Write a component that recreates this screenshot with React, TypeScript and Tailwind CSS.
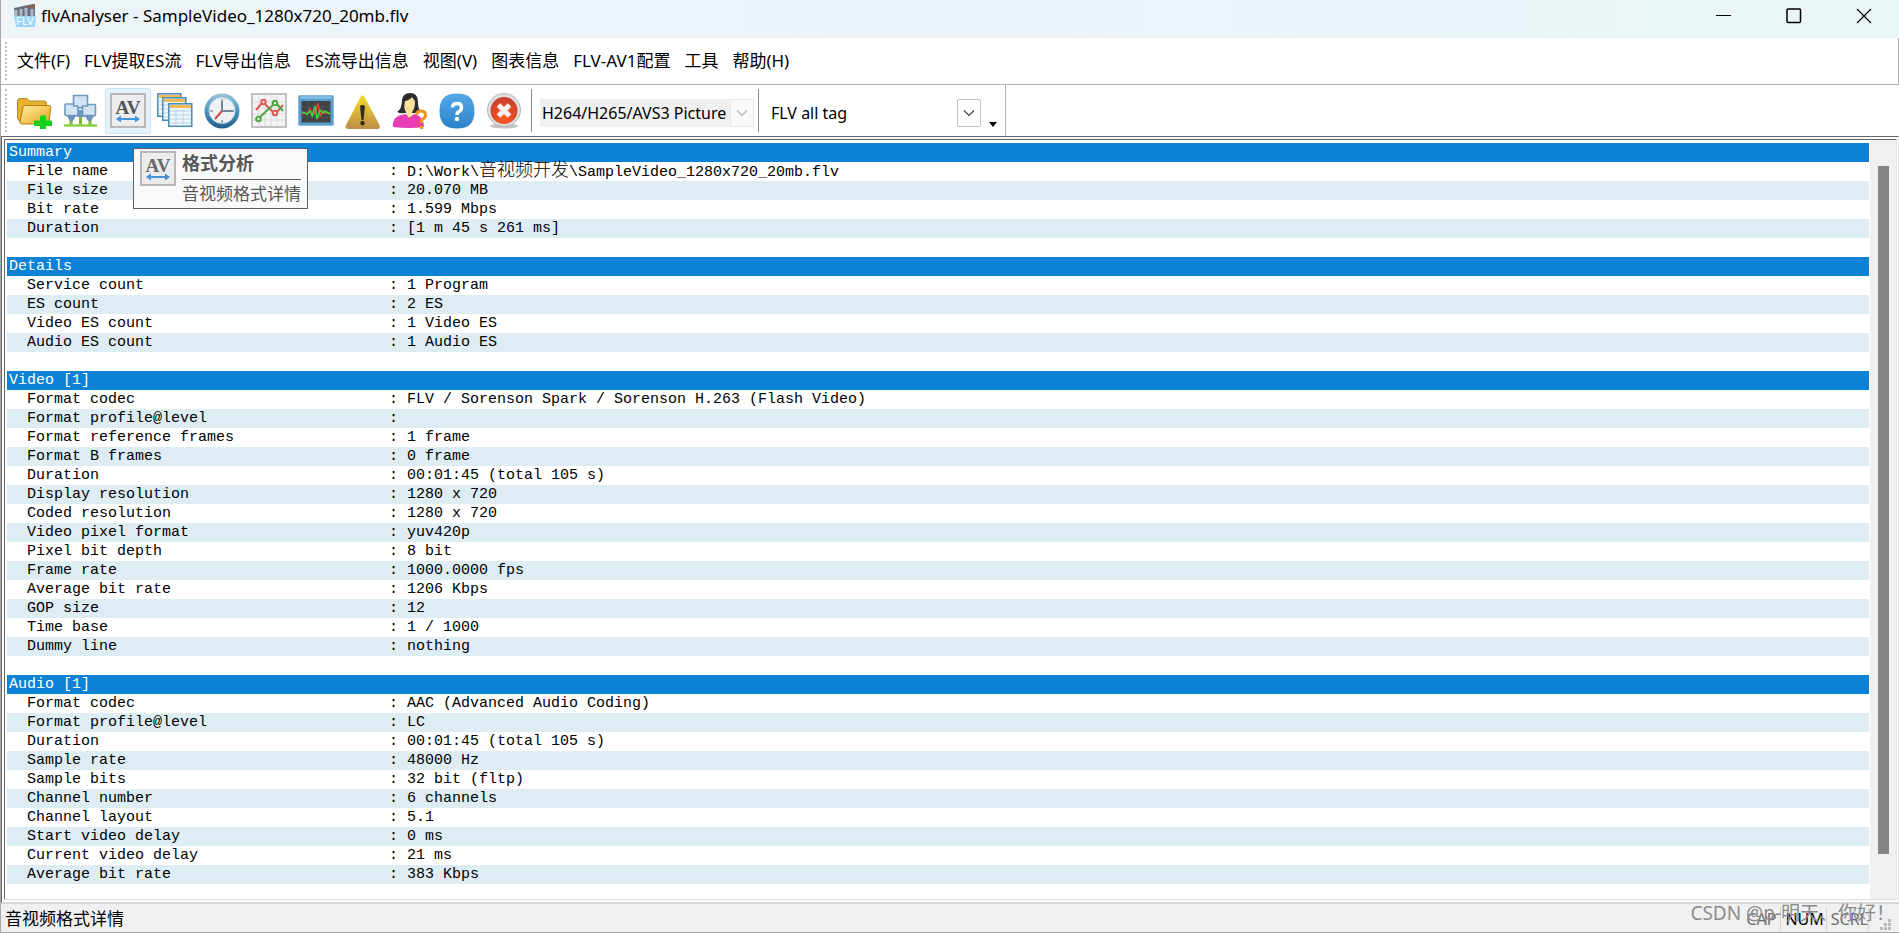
import type { ReactNode } from "react";

type Row = { label: string; value: ReactNode };
type Section = { title: string; rows: Row[] };

const r = (label: string, value: ReactNode): Row => ({ label, value });

const sections: Section[] = [
  {
    title: "Summary",
    rows: [
      r(
        "File name",
        <>
          D:\Work\<span className="text-lg leading-none font-light">音视频开发</span>\SampleVideo_1280x720_20mb.flv
        </>
      ),
      r("File size", "20.070 MB"),
      r("Bit rate", "1.599 Mbps"),
      r("Duration", "[1 m 45 s 261 ms]"),
    ],
  },
  {
    title: "Details",
    rows: [
      r("Service count", "1 Program"),
      r("ES count", "2 ES"),
      r("Video ES count", "1 Video ES"),
      r("Audio ES count", "1 Audio ES"),
    ],
  },
  {
    title: "Video [1]",
    rows: [
      r("Format codec", "FLV / Sorenson Spark / Sorenson H.263 (Flash Video)"),
      r("Format profile@level", ""),
      r("Format reference frames", "1 frame"),
      r("Format B frames", "0 frame"),
      r("Duration", "00:01:45 (total 105 s)"),
      r("Display resolution", "1280 x 720"),
      r("Coded resolution", "1280 x 720"),
      r("Video pixel format", "yuv420p"),
      r("Pixel bit depth", "8 bit"),
      r("Frame rate", "1000.0000 fps"),
      r("Average bit rate", "1206 Kbps"),
      r("GOP size", "12"),
      r("Time base", "1 / 1000"),
      r("Dummy line", "nothing"),
    ],
  },
  {
    title: "Audio [1]",
    rows: [
      r("Format codec", "AAC (Advanced Audio Coding)"),
      r("Format profile@level", "LC"),
      r("Duration", "00:01:45 (total 105 s)"),
      r("Sample rate", "48000 Hz"),
      r("Sample bits", "32 bit (fltp)"),
      r("Channel number", "6 channels"),
      r("Channel layout", "5.1"),
      r("Start video delay", "0 ms"),
      r("Current video delay", "21 ms"),
      r("Average bit rate", "383 Kbps"),
    ],
  },
];

const menus = [
  "文件(F)",
  "FLV提取ES流",
  "FLV导出信息",
  "ES流导出信息",
  "视图(V)",
  "图表信息",
  "FLV-AV1配置",
  "工具",
  "帮助(H)",
];

function Icon({ children }: { children: ReactNode }) {
  return (
    <svg viewBox="0 0 36 36" className="size-9" aria-hidden="true">
      {children}
    </svg>
  );
}

function FolderIcon() {
  return (
    <Icon>
      <defs>
        <linearGradient id="fold" x1="0" y1="0" x2="1" y2="1">
          <stop offset="0" stopColor="#fff0a0" />
          <stop offset="1" stopColor="#e8a21c" />
        </linearGradient>
      </defs>
      <path d="M1.500 8q0-2.500 2.500-2.500h7l2.500 2.500h15q2 0 2 2v12H8L4 29l-2.500-4z" fill="#e6b12c" stroke="#b58a2c" strokeWidth="1" />
      <path d="M9 12.500h24.500q1.500 0 1.300 1.500L33 28q-.5 3-3 3H6q-2.500 0-2-2.500L7 14.500q.4-2 2-2z" fill="url(#fold)" stroke="#b87d12" strokeWidth="1" />
      <path d="M24 22.500h6v5h6V33h-6v3.500h-6V33h-6v-5.500h6z" fill="#12d21c" />
    </Icon>
  );
}

function NetworkIcon() {
  return (
    <Icon>
      <path d="M8 26v6M17.500 20v12M27 26v6" stroke="#7db83a" strokeWidth="3" />
      <path d="M1 32.500h33" stroke="#8bd04a" strokeWidth="2.500" />
      <path d="M14 17h7l1 7h-8z" fill="#6c9ac6" />
      <g fill="#d3e4f5" stroke="#7098bd" strokeWidth="1.600">
        <rect x="2" y="11" width="13" height="11.500" rx="1" />
        <rect x="19.500" y="11.500" width="13" height="11" rx="1" />
        <path d="M10.500 2.500h14V13h-5l-1.500 2h-2l-1.500-2h-4z" />
      </g>
      <path d="M4 23h9l-3 5H7zM22 23h9l-3 5h-3z" fill="#6c94bc" />
    </Icon>
  );
}

function AvIcon({ large = true }: { large?: boolean }) {
  return (
    <Icon>
      <rect x="1" y="1" width="34" height="33" fill="#ececed" stroke="#b6b8ba" strokeWidth="2" />
      <text
        x="18"
        y="21"
        textAnchor="middle"
        className={large ? "fill-[#505256] font-bold" : "fill-[#67696c] font-bold"}
        fontFamily="Liberation Serif"
        fontSize="19"
      >
        AV
      </text>
      <path d="M8 26h20" stroke="#4492d8" strokeWidth="2" />
      <path d="M6 26l5-3.500v7zM30 26l-5-3.500v7z" fill="#4492d8" />
    </Icon>
  );
}

function Sheet({ x, y }: { x: number; y: number }) {
  return (
    <g transform={`translate(${x} ${y})`}>
      <rect x=".8" y=".8" width="23" height="22.500" fill="#eef6fc" stroke="#4a8ab2" strokeWidth="1.500" />
      <path d="M2 3.500h21" stroke="#f0b95c" strokeWidth="3" />
      <path d="M2 8h21M2 12h21M2 16h21M2 20h21M8 6v17M15 6v17" stroke="#b4d3ea" strokeWidth="1" />
    </g>
  );
}

function SheetsIcon() {
  return (
    <Icon>
      <Sheet x={0} y={0} />
      <Sheet x={5} y={4} />
      <Sheet x={11} y={10} />
    </Icon>
  );
}

function ClockIcon() {
  return (
    <Icon>
      <defs>
        <linearGradient id="ring" x1="0" y1="0" x2="0" y2="1">
          <stop offset="0" stopColor="#9cc4d8" />
          <stop offset=".5" stopColor="#4a94bf" />
          <stop offset="1" stopColor="#205e86" />
        </linearGradient>
      </defs>
      <circle cx="18" cy="18" r="17.500" fill="url(#ring)" />
      <circle cx="18" cy="17.500" r="13" fill="#eff2f4" stroke="#bfd6e3" strokeWidth="1" />
      <path d="M18 6v3M18 27v3M6 18h3M27 18h3" stroke="#8a969e" strokeWidth="1.500" />
      <path d="M18 8v10h11" fill="none" stroke="#6f8797" strokeWidth="2" />
      <path d="M18 18l-7 8" stroke="#c5504a" strokeWidth="2" />
    </Icon>
  );
}

function ChartIcon() {
  return (
    <Icon>
      <rect x="1" y="1" width="34" height="33" fill="#f4f4f4" stroke="#c0c0c0" strokeWidth="2" />
      <path d="M2 9h32M2 15h32M2 21h32M2 27h32M8 2v31M14 2v31M20 2v31M26 2v31" stroke="#dcdcdc" strokeWidth="1" />
      <g fill="none" strokeWidth="2">
        <path d="M5 17l6-7M14 11l8 8M26 19l6-7" stroke="#dc5c54" />
        <circle cx="12.500" cy="9" r="2.200" stroke="#dc5c54" />
        <circle cx="24" cy="20" r="2.200" stroke="#dc5c54" />
        <path d="M9 24L22 12M26 11l6 7" stroke="#4fa642" />
        <circle cx="7.500" cy="26" r="2.300" stroke="#4fa642" />
        <circle cx="24" cy="10" r="2.200" stroke="#4fa642" />
      </g>
    </Icon>
  );
}

function MonitorIcon() {
  return (
    <Icon>
      <rect x=".5" y="2.500" width="35" height="30" rx="1" fill="#5a9fce" stroke="#8ab9da" strokeWidth="1" />
      <path d="M2 4.500h32" stroke="#8cc5ec" strokeWidth="2" />
      <rect x="3.500" y="8" width="29" height="21.500" fill="#404244" />
      <path d="M4 14h28M4 19h28M4 24h28M10 8v21M17 8v21M24 8v21" stroke="#515456" strokeWidth="1" />
      <path d="M4 21l6-1 2-4 3 6 3-4 2-8 2 13 3-5 2 2h5" fill="none" stroke="#e0423a" strokeWidth="1.500" />
      <path d="M4 19l5 2 3-3 2 5 3-10 2 13 3-9 3 3 2-2 5 3" fill="none" stroke="#36d936" strokeWidth="1.500" />
    </Icon>
  );
}

function WarningIcon() {
  return (
    <Icon>
      <defs>
        <linearGradient id="warn" x1="0" y1="0" x2="0" y2="1">
          <stop offset="0" stopColor="#f3dc28" />
          <stop offset="1" stopColor="#bd8d48" />
        </linearGradient>
      </defs>
      <path d="M15.500 4q2-3.500 4 0L34.500 32q1.500 4-2 4H3q-3.500 0-2-4z" fill="url(#warn)" />
      <path d="M15 13q2.500-2 5 0l-1.500 14h-2z" fill="#2f2b20" />
      <circle cx="17.500" cy="30" r="2.200" fill="#2f2b20" />
    </Icon>
  );
}

function PersonIcon() {
  return (
    <Icon>
      <path d="M10 7q1-7 8-7 8 0 8 9 0 7 3 10l-6 1H12q-3 1-7-1 5-3 5-12z" fill="#2d2b2c" />
      <path d="M1 34q-1-10 8-12l5-1 4 3 4-3 5 2q5 3 5 11-15 2-31 0z" fill="#e83db4" />
      <path d="M13 8q5-1 7-4 2 3 3 4 0 8-3 11v2l-3 4-3-4v-2q-3-4-1-11z" fill="#f6e29b" />
      <path d="M24.500 22q0-4 4.500-4t4.500 4q0 3-4 5v3M29.500 33v3" fill="none" stroke="#ee9422" strokeWidth="3" />
    </Icon>
  );
}

function HelpIcon() {
  return (
    <Icon>
      <defs>
        <linearGradient id="help" x1="0" y1="0" x2="0" y2="1">
          <stop offset="0" stopColor="#55a9e8" />
          <stop offset="1" stopColor="#2c82c9" />
        </linearGradient>
      </defs>
      <path d="M18 0.500C30 .5 35.500 6 35.500 18s-5.500 17.500-17.500 17.500S.5 30 .5 18 6 .5 18 .5z" fill="url(#help)" />
      <path d="M13.500 14.500q0-4 4.500-4t4.500 4q0 2.500-2.500 4-2 1-2 3.500" fill="none" stroke="#fff" strokeWidth="3.500" />
      <circle cx="18" cy="26" r="2.200" fill="#fff" />
    </Icon>
  );
}

function CloseIcon() {
  return (
    <Icon>
      <defs>
        <radialGradient id="stop" cx=".5" cy=".75" r=".7">
          <stop offset="0" stopColor="#ff5a1f" />
          <stop offset="1" stopColor="#c8402c" />
        </radialGradient>
      </defs>
      <ellipse cx="18" cy="33" rx="14" ry="2.500" fill="#c4c4c4" />
      <circle cx="18" cy="17" r="16.500" fill="#dedede" stroke="#b9b9b9" strokeWidth="1" />
      <circle cx="18" cy="17.500" r="13.500" fill="url(#stop)" />
      <path d="M12.500 12l11 11M23.500 12l-11 11" stroke="#f6f1ef" strokeWidth="5" />
    </Icon>
  );
}

function AppIcon() {
  return (
    <svg viewBox="0 0 24 24" className="size-6" aria-hidden="true">
      <path d="M1 4l5-1 4-1 5-1 7-1v14H2z" fill="#6a6c74" />
      <path d="M3 6v6M8 5v7M13 4v8M19 5v7" stroke="#a9b8cc" strokeWidth="3" />
      <path d="M14 3l8-2" stroke="#8d5f4c" strokeWidth="2" />
      <path d="M1 12h22l-1 11H3z" fill="#9bd6fa" />
      <text x="12" y="21" textAnchor="middle" fill="#fff" fontFamily="Liberation Sans" fontSize="10">
        FLV
      </text>
    </svg>
  );
}

const tools = [
  { name: "打开", icon: <FolderIcon /> },
  { name: "网络", icon: <NetworkIcon /> },
  { name: "格式分析", icon: <AvIcon /> },
  { name: "列表", icon: <SheetsIcon /> },
  { name: "时间", icon: <ClockIcon /> },
  { name: "图表", icon: <ChartIcon /> },
  { name: "监视", icon: <MonitorIcon /> },
  { name: "警告", icon: <WarningIcon /> },
  { name: "用户", icon: <PersonIcon /> },
  { name: "帮助", icon: <HelpIcon /> },
  { name: "关闭", icon: <CloseIcon /> },
];

function Combo({ label, value, disabled }: { label: string; value: string; disabled?: boolean }) {
  return (
    <div className={disabled ? "mt-1 ml-1 grid h-7 w-[214px] items-center bg-[#f0f0f0]" : "mt-1 ml-1 grid h-7 w-[214px] items-center bg-white"}>
      <select
        aria-label={label}
        defaultValue={value}
        disabled={disabled}
        className={
          disabled
            ? "col-start-1 row-start-1 h-7 w-full appearance-none pr-6 pl-0.5 text-base text-black opacity-100"
            : "col-start-1 row-start-1 h-7 w-full appearance-none pr-6 pl-1 text-base text-black"
        }
      >
        <option>{value}</option>
      </select>
      <span
        className={
          disabled
            ? "pointer-events-none col-start-1 row-start-1 grid h-7 w-6 place-items-center justify-self-end border border-[#e8e8e8] bg-[#f9f9f9] text-[#b5b5b5]"
            : "pointer-events-none col-start-1 row-start-1 grid h-7 w-6 place-items-center justify-self-end rounded-xs border border-[#c4c4c4] bg-white text-[#404040]"
        }
      >
        <svg viewBox="0 0 12 8" className="h-2 w-3" aria-hidden="true">
          <path d="M1 1.500L6 6.500l5-5" fill="none" stroke="currentColor" strokeWidth="1.200" />
        </svg>
      </span>
    </div>
  );
}

function Grip() {
  return <div className="my-1 ml-1 w-0 self-stretch border-l-2 border-dotted border-[#c0c0c0]" />;
}

export default function App() {
  return (
    <div className="flex min-h-screen flex-col border-b border-l border-[#a8a8a8] bg-white font-['Noto_Sans','Noto_Sans_CJK_SC',sans-serif] text-base text-black">
      <header className="flex h-[38px] items-start bg-linear-to-r from-[#edf4f8] via-[#ebf3f9] to-[#e9f5f7] pl-3">
        <div className="flex h-8 items-center gap-1">
          <AppIcon />
          <h1 className="text-[17px]">flvAnalyser - SampleVideo_1280x720_20mb.flv</h1>
        </div>
        <div className="ml-auto flex h-8">
          <button aria-label="Minimize" className="grid w-[70px] place-items-center">
            <svg viewBox="0 0 16 16" className="size-4"><path d="M0 7.500h15" stroke="#000" /></svg>
          </button>
          <button aria-label="Maximize" className="grid w-[70px] place-items-center">
            <svg viewBox="0 0 16 16" className="size-4">
              <rect x="1" y="1" width="13.500" height="13.500" rx="1" fill="none" stroke="#000" strokeWidth="1.500" />
            </svg>
          </button>
          <button aria-label="Close" className="grid w-[70px] place-items-center">
            <svg viewBox="0 0 16 16" className="size-4"><path d="M1 1l14 14M15 1L1 15" stroke="#000" strokeWidth="1.200" /></svg>
          </button>
        </div>
      </header>

      <nav className="flex h-[47px] items-center border-r border-b border-[#b0b0b0]">
        <Grip />
        <ul className="flex gap-3.5 pl-2.5 text-[17px]">
          {menus.map((m) => (
            <li key={m}>
              <button className="whitespace-nowrap">{m}</button>
            </li>
          ))}
        </ul>
      </nav>

      <div className="flex h-[51px]">
        <div className="flex items-center border-r border-[#b0b0b0]">
          <Grip />
          <div className="flex items-center gap-px pl-1">
            {tools.map((t) => (
              <div key={t.name} className="relative">
                <button
                  aria-label={t.name}
                  className={
                    t.name === "格式分析"
                      ? "grid h-[46px] w-[46px] place-items-center rounded-xs border border-[#cce4f7] bg-[#e5f1fb]"
                      : "grid h-[46px] w-[46px] place-items-center"
                  }
                >
                  {t.icon}
                </button>
                {t.name === "格式分析" && (
                  <div
                    role="tooltip"
                    className="absolute top-full left-7 z-10 mt-3.5 flex items-start gap-1.5 border border-[#606060] bg-[#f9f9f9] py-0.5 pr-1.5 pl-1.5 whitespace-nowrap text-[#575757]"
                  >
                    <AvIcon large={false} />
                    <div className="flex flex-col">
                      <strong className="border-b border-[#606060] pb-1 text-lg leading-6">格式分析</strong>
                      <span className="pt-0.5 text-[17px] leading-6">音视频格式详情</span>
                    </div>
                  </div>
                )}
              </div>
            ))}
          </div>
          <div className="ml-1 h-[43px] w-px bg-[#8c8c8c]" />
          <div className="ml-1">
            <Combo label="Picture type" value="H264/H265/AVS3 Picture" disabled />
          </div>
          <div className="ml-1 h-[43px] w-px bg-[#8c8c8c]" />
          <div className="ml-1">
            <Combo label="Tag filter" value="FLV all tag" />
          </div>
          <button aria-label="More" className="mt-7 mr-1 ml-1 grid w-4 place-items-center">
            <svg viewBox="0 0 8 5" className="h-[5px] w-2"><path d="M0 0h8L4 5z" /></svg>
          </button>
        </div>
      </div>

      <main className="flex grow border-t-4 border-r-3 border-b-4 border-l-4 border-double border-t-[#686868] border-r-[#e3e3e3] border-b-[#dedede] border-l-[#686868]">
        <div className="min-w-0 grow bg-white px-0.5 pt-[3px] pr-px pb-3.5">
          <table className="w-full table-fixed border-collapse font-['Liberation_Mono','Noto_Sans_CJK_SC',monospace] text-[15px] leading-[19px] whitespace-pre">
            <colgroup>
              <col className="w-[382px]" />
              <col className="w-[18px]" />
              <col />
            </colgroup>
            {sections.map((s, i) => (
              <tbody key={s.title}>
                <tr className="h-[19px] bg-[#0b82d6] text-left text-white">
                  <th colSpan={3} className="h-[19px] p-0 pl-0.5 font-normal">{s.title}</th>
                </tr>
                {s.rows.map((row) => (
                  <tr key={row.label} className="h-[19px] odd:bg-[#deecf4]">
                    <td className="p-0 pl-5">{row.label}</td>
                    <td className="p-0">:</td>
                    <td className="p-0"><div className="h-[19px]">{row.value}</div></td>
                  </tr>
                ))}
                {i < sections.length - 1 && (
                  <tr className="h-[19px]">
                    <td colSpan={3} className="p-0" />
                  </tr>
                )}
              </tbody>
            ))}
          </table>
        </div>
        <div className="flex w-[26px] shrink-0 flex-col items-center bg-[#f0f0f0] pt-[26px] pb-[45px]">
          <div className="w-[11px] grow bg-[#858585]" />
        </div>
      </main>

      <footer className="flex h-[29px] items-center border-t border-[#d4d4d4] bg-[#f0f0f0] pt-0.5 pl-1">
        <span className="text-[17px] leading-6">音视频格式详情</span>
        <div className="relative ml-auto flex items-center gap-1 text-base leading-6 text-[#6d6d6d]">
          <span className="border-r border-[#d4d4d4] pr-1">CAP</span>
          <span className="border-r border-[#d4d4d4] pr-0.5 text-black">NUM</span>
          <span className="border-r border-[#d4d4d4]">SCRL</span>
          <span className="absolute right-1 bottom-1.5 text-[19px] whitespace-nowrap text-[#8c8c8c]">CSDN @p-明天、你好！</span>
          <svg viewBox="0 0 12 12" className="ml-1.5 size-3 self-end" fill="#b8b8b8" aria-hidden="true">
            <path d="M9 0h3v3H9zM9 4h3v3H9zM9 8h3v3H9zM5 4h3v3H5zM5 8h3v3H5zM1 8h3v3H1z" />
          </svg>
          <span className="w-1" />
        </div>
      </footer>
    </div>
  );
}
